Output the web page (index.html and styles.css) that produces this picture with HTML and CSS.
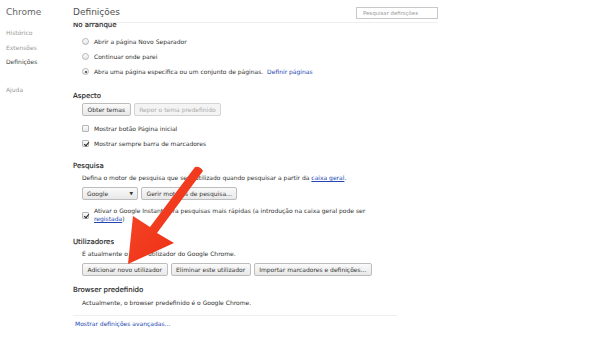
FILE: index.html
```html
<!DOCTYPE html>
<html lang="pt">
<head>
    <meta charset="UTF-8">
    <title>Definições</title>
    <link rel="stylesheet" href="styles.css">
</head>
<body>
    <div id="page">
        <div id="sidebar">
            <h1>Chrome</h1>
            <ul class="nav">
                <li>Histórico</li>
                <li>Extensões</li>
                <li class="selected">Definições</li>
                <li class="gap">Ajuda</li>
            </ul>
        </div>

        <div id="main">
            <div id="header">
                <h1>Definições</h1>
                <div class="search">Pesquisar definições</div>
            </div>

            <div class="scroller">
                <div class="content">
                    <!-- Arranque -->
                    <div class="section first">
                        <h3>No arranque</h3>
                        <div class="row"><span class="radio"></span><span>Abrir a página Novo Separador</span></div>
                        <div class="row"><span class="radio"></span><span>Continuar onde parei</span></div>
                        <div class="row"><span class="radio on"></span><span>Abra uma página específica ou um conjunto de páginas. &nbsp;<a class="link">Definir páginas</a></span></div>
                    </div>

                    <!-- Aspecto -->
                    <div class="section aspect">
                        <h3>Aspecto</h3>
                        <div class="buttons">
                            <button class="btn">Obter temas</button>
                            <button class="btn" disabled>Repor o tema predefinido</button>
                        </div>
                        <div class="checks">
                            <div class="row"><span class="check"></span><span>Mostrar botão Página inicial</span></div>
                            <div class="row"><span class="check on"></span><span>Mostrar sempre barra de marcadores</span></div>
                        </div>
                    </div>

                    <!-- Pesquisa -->
                    <div class="section">
                        <h3>Pesquisa</h3>
                        <p>Defina o motor de pesquisa que será utilizado quando pesquisar a partir da <a class="link under">caixa geral</a>.</p>
                        <div class="buttons">
                            <div class="select">Google<span class="caret">▼</span></div>
                            <button class="btn">Gerir motores de pesquisa...</button>
                        </div>
                        <div class="row wrap"><span class="check on"></span><span class="wrap-text">Ativar o Google Instant para pesquisas mais rápidas (a introdução na caixa geral pode ser <a class="link under">registada</a>)</span></div>
                    </div>

                    <!-- Utilizadores -->
                    <div class="section users">
                        <h3>Utilizadores</h3>
                        <p>É atualmente o único utilizador do Google Chrome.</p>
                        <div class="buttons">
                            <button class="btn">Adicionar novo utilizador</button>
                            <button class="btn">Eliminar este utilizador</button>
                            <button class="btn">Importar marcadores e definições...</button>
                        </div>
                    </div>

                    <!-- Browser predefinido -->
                    <div class="section browser">
                        <h3>Browser predefinido</h3>
                        <p>Actualmente, o browser predefinido é o Google Chrome.</p>
                    </div>

                    <div class="footer">
                        <a class="link">Mostrar definições avançadas...</a>
                    </div>
                </div>
            </div>
        </div>

        <!-- red arrow drawn over the page -->
        <svg class="arrow" width="610" height="340" viewBox="0 0 610 340">
            <defs>
                <linearGradient id="red" x1="0" y1="0" x2="1" y2="1">
                    <stop offset="0" stop-color="#f64b2c"/>
                    <stop offset="1" stop-color="#ec2a10"/>
                </linearGradient>
            </defs>
            <path d="M195 167 Q200 166 203 171 L157 233 L174 243 L128 264 L133 216 L150 227 Z" fill="url(#red)"/>
        </svg>
    </div>
</body>
</html>
```

FILE: styles.css
```css
/* Page basics */
body {
    margin: 0;
    background-color: #fff;
    font-family: "DejaVu Sans", sans-serif;
    font-size: 6px;
    color: #303030;
}

#page {
    display: flex;
    width: 610px;
    height: 340px;
    overflow: hidden;
}

/* Left navigation */
#sidebar {
    width: 73px;
    padding-left: 6px;
    box-sizing: border-box;
}

#sidebar h1 {
    margin: 6px 0 0;
    font-size: 9px;
    font-weight: normal;
    line-height: 12px;
    color: #666;
}

.nav {
    list-style: none;
    margin: 8px 0 0;
    padding: 0;
}

.nav li {
    height: 14.5px;
    line-height: 14.5px;
    color: #999;
}

.nav li.selected {
    color: #444;
}

.nav li.gap {
    margin-top: 13px;
}

/* Main column */
#main {
    width: 364px;
    display: flex;
    flex-direction: column;
}

#header {
    height: 22px;
    border-bottom: 1px solid #eee;
    display: flex;
    align-items: flex-start;
    justify-content: space-between;
    background-color: #fff;
    position: relative;
    z-index: 1;
}

#header h1 {
    margin: 6px 0 0;
    font-size: 9px;
    line-height: 12px;
    font-weight: normal;
    color: #505050;
}

.search {
    width: 82px;
    height: 12px;
    margin: 7px -1px 0 0;
    box-sizing: border-box;
    border: 1px solid #c8c8c8;
    padding-left: 6px;
    line-height: 10px;
    font-size: 5.4px;
    color: #999;
}

.scroller {
    flex: 1;
    overflow: hidden;
}

.content {
    margin-top: -4px;
}

.section {
    margin-top: 9px;
}

.section.first {
    margin-top: 0;
}

.section.aspect {
    margin-top: 11px;
}

.section.users {
    margin-top: 13px;
}

.section.browser {
    margin-top: 8px;
}

.section h3 {
    margin: 0;
    height: 12px;
    line-height: 12px;
    font-size: 7px;
    font-weight: normal;
    color: #222;
    -webkit-text-stroke: 0.15px #222;
}

.section p {
    margin: 0 0 0 9px;
    line-height: 12px;
}

.browser p {
    margin-top: 1px;
}

.first h3 {
    margin-bottom: 3px;
}

.row {
    display: flex;
    align-items: center;
    height: 15px;
    padding-left: 9px;
}

.row.wrap {
    align-items: flex-start;
    height: auto;
    margin-top: 7px;
    line-height: 8px;
}

.row.wrap .check {
    margin-top: 5px;
}

.wrap-text {
    width: 285px;
}

.checks {
    margin-top: 5px;
}

.link {
    color: #2346b2;
}

.link.under {
    text-decoration: underline;
}

/* Radios and checkboxes */
.radio,
.check {
    width: 7px;
    height: 7px;
    margin-right: 5px;
    flex-shrink: 0;
    box-sizing: border-box;
    border: 1px solid #b5b5b5;
    background: linear-gradient(#fdfdfd, #e6e6e6);
    position: relative;
}

.radio {
    border-radius: 50%;
}

.check {
    border-radius: 1px;
}

.radio.on::after {
    content: "";
    position: absolute;
    left: 1.5px;
    top: 1.5px;
    width: 2px;
    height: 2px;
    border-radius: 50%;
    background-color: #333;
}

.check.on::after {
    content: "";
    position: absolute;
    left: 1.5px;
    top: -0.5px;
    width: 2px;
    height: 4px;
    border: solid #222;
    border-width: 0 1.3px 1.3px 0;
    transform: rotate(40deg);
}

/* Buttons */
.buttons {
    display: flex;
    gap: 3px;
    margin: 1px 0 0 9px;
}

.section p + .buttons {
    margin-top: 3px;
}

.btn,
.select {
    height: 13px;
    padding: 0 4.5px;
    box-sizing: border-box;
    border: 1px solid #bdbdbd;
    border-radius: 2px;
    background: linear-gradient(#fafafa, #e8e8e8);
    font-family: "DejaVu Sans", sans-serif;
    font-size: 6px;
    line-height: 11px;
    color: #333;
}

.btn:disabled {
    color: #aaa;
    border-color: #d4d4d4;
    background: #f4f4f4;
}

.select {
    width: 56px;
    padding: 0 4px;
    display: flex;
    justify-content: space-between;
}

.caret {
    font-size: 4.5px;
}

/* Advanced settings link */
.footer {
    margin: 6px 40px 0 0;
    border-top: 1px solid #eee;
    padding-left: 2px;
    line-height: 16px;
}

/* Annotation */
.arrow {
    position: absolute;
    left: 0;
    top: 0;
    pointer-events: none;
}
```
